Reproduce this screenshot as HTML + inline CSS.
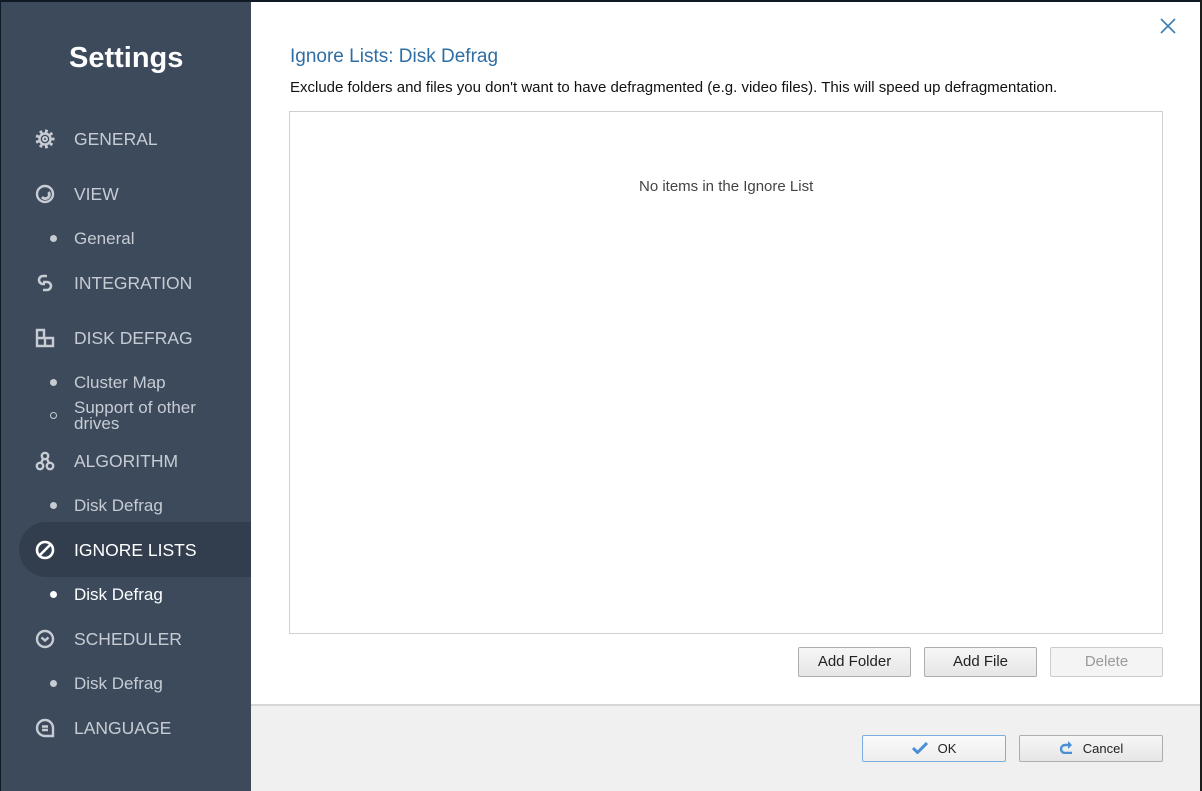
<!DOCTYPE html>
<html><head><meta charset="utf-8"><style>
*{margin:0;padding:0;box-sizing:border-box}
body{width:1202px;height:791px;overflow:hidden;background:#0f1a24;font-family:"Liberation Sans",sans-serif;position:relative}
#side{position:absolute;left:1px;top:2px;width:250px;height:789px;background:#3c4a5c}
#main{position:absolute;left:251px;top:2px;width:949px;height:789px;background:#fff}
#foot{position:absolute;left:251px;top:704px;width:949px;height:87px;background:#f0f0f0;border-top:2px solid #d6d6d6}
.t{position:absolute;white-space:nowrap;line-height:1}
.cap{color:#c7ccd3;font-size:17.5px;left:74px}
.sub{color:#c7ccd3;font-size:17px;left:74px}
.dot{position:absolute;left:50px;width:7px;height:7px;border-radius:50%;background:#c7ccd3}
.ic{position:absolute;left:35px}
.btn{position:absolute;height:30px;border:1px solid #adadad;border-radius:2px;background:linear-gradient(#f6f6f6,#e6e6e6);font-size:15px;color:#222;text-align:center;line-height:28px}
</style></head><body>
<div id="side"></div>
<div style="position:absolute;left:19px;top:522px;width:232px;height:55px;background:#323e4e;border-radius:28px 0 0 28px"></div>
<div class="t" style="left:69px;top:44px;font-size:29px;font-weight:bold;color:#fff">Settings</div>

<svg class="ic" style="top:129px" width="20" height="20" viewBox="0 0 20 20" fill="none" stroke="#c7ccd3"><path stroke-width="4" stroke-dasharray="2.6 2.6" d="M10 2.5a7.5 7.5 0 1 1 0 15a7.5 7.5 0 1 1 0-15"/><circle cx="10" cy="10" r="5.5" stroke-width="2.4"/><circle cx="10" cy="10" r="2" stroke-width="2"/></svg>
<div class="t cap" style="top:131px">GENERAL</div>
<svg class="ic" style="top:184px" width="20" height="20" viewBox="0 0 20 20" fill="none" stroke="#c7ccd3" stroke-width="2.4"><circle cx="10" cy="10" r="8"/><path d="M13.5 8a4 4 0 0 1-6.5 5" stroke-width="2.8"/></svg>
<div class="t cap" style="top:186px">VIEW</div>
<div class="dot" style="top:235px"></div><div class="t sub" style="top:230px">General</div>
<svg class="ic" style="top:273px" width="20" height="20" viewBox="0 0 20 20" fill="none" stroke="#c7ccd3" stroke-width="2.6"><path d="M12 3H8a4 4 0 0 0 0 8h2M8 9h4a4 4 0 0 1 0 8H8"/></svg>
<div class="t cap" style="top:275px">INTEGRATION</div>
<svg class="ic" style="top:328px" width="20" height="20" viewBox="0 0 20 20" fill="none" stroke="#c7ccd3" stroke-width="2.4"><path d="M2 2h7v8H2zM2 10h16v8H2zM10 10v8"/></svg>
<div class="t cap" style="top:330px">DISK DEFRAG</div>
<div class="dot" style="top:379px"></div><div class="t sub" style="top:374px">Cluster Map</div>
<div style="position:absolute;left:50px;top:412px;width:7px;height:7px;border-radius:50%;border:1.5px solid #c7ccd3"></div>
<div class="t sub" style="top:400px;line-height:16px">Support of other<br>drives</div>
<svg class="ic" style="top:451px" width="20" height="20" viewBox="0 0 20 20" fill="none" stroke="#c7ccd3" stroke-width="2.4"><circle cx="10" cy="5" r="3.2"/><circle cx="5" cy="15" r="3.2"/><circle cx="15" cy="15" r="3.2"/><path d="M8 8l-2 4M12 8l2 4"/></svg>
<div class="t cap" style="top:453px">ALGORITHM</div>
<div class="dot" style="top:502px"></div><div class="t sub" style="top:497px">Disk Defrag</div>
<svg class="ic" style="top:540px" width="20" height="20" viewBox="0 0 20 20" fill="none" stroke="#fff" stroke-width="2.6"><circle cx="10" cy="10" r="8"/><path d="M15 5L5 15"/></svg>
<div class="t cap" style="top:542px;color:#fff">IGNORE LISTS</div>
<div class="dot" style="top:591px;background:#fff"></div><div class="t sub" style="top:586px;color:#fff">Disk Defrag</div>
<svg class="ic" style="top:629px" width="20" height="20" viewBox="0 0 20 20" fill="none" stroke="#c7ccd3" stroke-width="2.4"><circle cx="10" cy="10" r="8"/><path d="M6.5 8.5l3.5 3 3.5-3"/></svg>
<div class="t cap" style="top:631px">SCHEDULER</div>
<div class="dot" style="top:680px"></div><div class="t sub" style="top:675px">Disk Defrag</div>
<svg class="ic" style="top:718px" width="20" height="20" viewBox="0 0 20 20" fill="none" stroke="#c7ccd3" stroke-width="2.4"><path d="M18 18H10a8 8 0 1 1 8-8z"/><path d="M7 8.5h6M7 12h6"/></svg>
<div class="t cap" style="top:720px">LANGUAGE</div>

<div id="main"></div>
<svg style="position:absolute;left:1160px;top:18px" width="16" height="16" viewBox="0 0 16 16" stroke="#3b7eb5" stroke-width="1.6"><path d="M1 1l14 14M15 1L1 15"/></svg>
<div class="t" style="left:290px;top:47px;font-size:19px;color:#2f6ea5">Ignore Lists: Disk Defrag</div>
<div class="t" style="left:290px;top:80px;font-size:15px;color:#111">Exclude folders and files you don't want to have defragmented (e.g. video files). This will speed up defragmentation.</div>
<div style="position:absolute;left:289px;top:111px;width:874px;height:523px;border:1px solid #d0d0d0"></div>
<div class="t" style="left:639px;top:179px;font-size:15px;color:#444">No items in the Ignore List</div>
<div class="btn" style="left:798px;top:647px;width:113px">Add Folder</div>
<div class="btn" style="left:924px;top:647px;width:113px">Add File</div>
<div class="btn" style="left:1050px;top:647px;width:113px;color:#999;border-color:#ccc;background:#f4f4f4">Delete</div>
<div id="foot"></div>
<div class="btn" style="left:862px;top:735px;width:144px;height:27px;line-height:25px;font-size:13px;border-color:#7aaee0;background:linear-gradient(#fafafa,#eee)"><svg width="16" height="12" viewBox="0 0 16 12" style="vertical-align:-1px;margin-right:10px"><path d="M1 6l4.5 4.5L15 1" fill="none" stroke="#4a8fd6" stroke-width="3"/></svg>OK</div>
<div class="btn" style="left:1019px;top:735px;width:144px;height:27px;line-height:25px;font-size:13px"><svg width="14" height="13" viewBox="0 0 14 13" style="vertical-align:-1px;margin-right:10px"><path d="M11 4H6a4 4 0 0 0 0 8h7" fill="none" stroke="#4a8fd6" stroke-width="2.4"/><path d="M9 0l4 4-4 4z" fill="#4a8fd6"/></svg>Cancel</div>
<div style="position:absolute;left:1200px;top:0;width:2px;height:791px;background:#1c1c1c"></div>
</body></html>
